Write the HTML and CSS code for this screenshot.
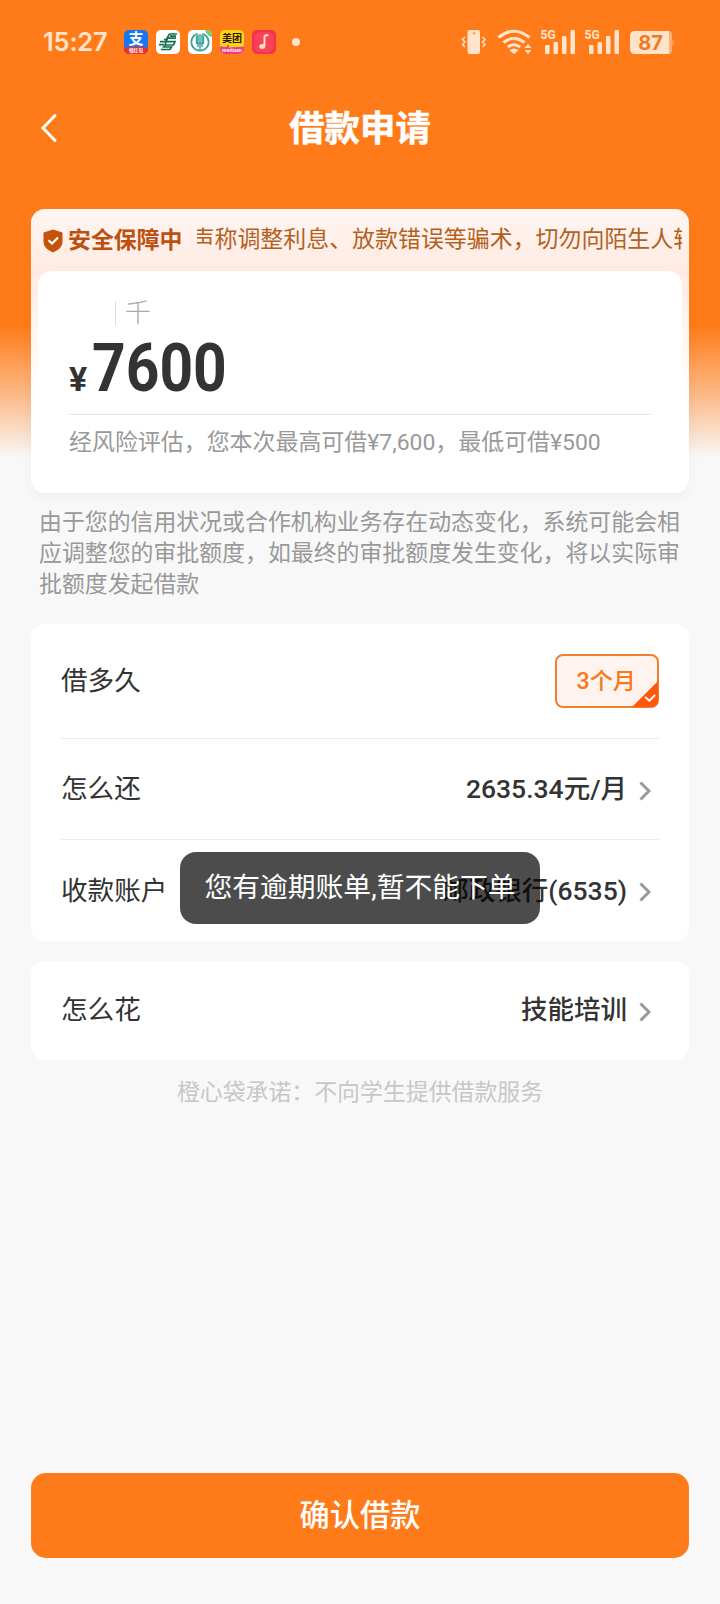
FILE: index.html
```html
<!DOCTYPE html>
<html lang="zh-CN">
<head>
<meta charset="utf-8">
<title>借款申请</title>
<link rel="stylesheet" href="styles.css">
</head>
<body>
<main class="screen">
  <header class="status">
    <span class="time">15:27</span>
    <div class="apps">
      <svg class="app" viewBox="0 0 24 24"><defs><clipPath id="r"><rect width="24" height="24" rx="5"/></clipPath></defs><g clip-path="url(#r)"><rect width="24" height="24" fill="#1677f5"/><path d="M0 17.5Q12 16 24 17.5V24H0Z" fill="#e5302c"/><text x="12" y="14.4" class="app-zhi">支</text><text x="12" y="22.4" class="app-tiny">领红包</text></g></svg>
      <svg class="app" viewBox="0 0 24 24"><rect width="24" height="24" rx="5" fill="#fff"/><g fill="none" stroke="#14704f" stroke-width="1.7"><path d="M21 4H13.500L11 8.200H20M20 6.200H14M4 11.700H19L17.500 15H9M8 9.500H12M3 14.700H8M6.500 17H15.500L14 19.500H5M11 8.500L8.500 17"/></g></svg>
      <svg class="app" viewBox="0 0 24 24"><rect width="24" height="24" rx="5" fill="#fff"/><path d="M17 0H19Q24 0 24 5V7Q19 6 17 0Z" fill="#79cf62"/><g fill="none" stroke="#37a39a"><path d="M9.500 3.800A8.600 8.600 0 1 0 14.500 3.800" stroke-width="1.900"/><path d="M8.500 6V13.500H15.500V6M12 4V20M10 4.500V17M14 4.500V17" stroke-width="1.400"/></g></svg>
      <svg class="app" viewBox="0 0 24 24"><g clip-path="url(#r)"><rect width="24" height="24" fill="#ffd31a"/><path d="M0 16.500Q12 18 24 16.500V24H0Z" fill="#ed3c82"/><path d="M8 14L9.500 17H6.500Z" fill="#ed3c82"/><text x="12" y="12.300" class="app-mt">美团</text><text x="12" y="22.300" class="app-tiny">meituan</text></g></svg>
      <svg class="app" viewBox="0 0 24 24"><rect width="24" height="24" rx="5" fill="#f4324c"/><rect x="2" y="2" width="20" height="20" rx="6" fill="#fb5266" opacity=".5"/><path d="M16.500 5.200H14Q12.500 5.200 12.500 7V16" fill="none" stroke="#ffd9c9" stroke-width="2"/><ellipse cx="10.200" cy="16.500" rx="3" ry="2.500" fill="#ffd9c9"/></svg>
      <i class="dot"></i>
    </div>
    <svg class="signals" viewBox="456 24 224 34">
      <g fill="#ffe3cb">
        <rect x="467.500" y="29" width="12.500" height="24" rx="2"/>
        <circle cx="474" cy="32.200" r="1.200" fill="#ff9b52"/>
        <path d="M465 36L462.500 38.500L465 41L462.500 43.500L465 46M482.500 36L485 38.500L482.500 41L485 43.500L482.500 46" fill="none" stroke="#ffe3cb" stroke-width="1.500"/>
        <g fill="none" stroke="#ffe3cb" stroke-width="3"><path d="M498.500 36.500Q514 24 529.500 36.500"/><path d="M503.500 41.500Q514 33.500 524.500 41.500"/><path d="M507.800 46Q514 41.500 520.200 46"/></g>
        <path d="M509.300 49.200Q514 46 518.700 49.200L514 53Z"/>
        <path d="M528 43L531.500 47H524.500ZM528 53L531.500 49H524.500Z"/>
        <rect x="545" y="44" width="4.500" height="9" rx="1"/><rect x="553.500" y="41" width="4.500" height="12" rx="1"/><rect x="562" y="35" width="4.500" height="18" rx="1"/><rect x="570.500" y="29" width="4.500" height="24" rx="1"/>
        <rect x="589" y="44" width="4.500" height="9" rx="1"/><rect x="597.500" y="41" width="4.500" height="12" rx="1"/><rect x="606" y="35" width="4.500" height="18" rx="1"/><rect x="614.500" y="29" width="4.500" height="24" rx="1"/>
        <text x="540.500" y="38.300" class="net">5G</text><text x="584.500" y="38.300" class="net">5G</text>
        <path d="M635 30H669V53H635Q630 53 630 48V35Q630 30 635 30Z"/>
        <path d="M669 30Q672 30.500 672 34V49Q672 52.500 669 53ZM672.500 38Q674 39 674 41.500Q674 44 672.500 45Z" opacity=".5"/>
      </g>
      <text x="650.500" y="49" class="level">87</text>
    </svg>
  </header>

  <nav class="nav">
    <svg class="back" viewBox="0 0 18 30"><path d="M15 2.500L3 15L15 27.500"/></svg>
    <h1 class="title">借款申请</h1>
  </nav>

  <section class="loan">
    <div class="notice">
      <svg class="shield" viewBox="0 0 20 24"><path d="M10 .5L19.500 3.500V13Q19.500 19.500 10 23.500Q.5 19.500 .5 13V3.500Z" fill="#c4530b"/><path d="M5.500 11.200L9 14.500L15 8.500" fill="none" stroke="#fff" stroke-width="2.200"/></svg>
      <strong class="safe">安全保障中</strong>
      <div class="ticker"><span class="ticker-text">声称调整利息、放款错误等骗术，切勿向陌生人转</span></div>
    </div>
    <div class="amount-card">
      <div class="unit"><i class="tick"></i><span>千</span></div>
      <div class="amount"><span class="yen">¥</span><span class="figure">7600</span></div>
      <p class="range">经风险评估，您本次最高可借¥7,600，最低可借¥500</p>
    </div>
  </section>

  <p class="remark">由于您的信用状况或合作机构业务存在动态变化，系统可能会相应调整您的审批额度，如最终的审批额度发生变化，将以实际审批额度发起借款</p>

  <section class="card">
    <div class="row row-term">
      <span>借多久</span>
      <span class="term">3个月<svg class="corner" viewBox="0 0 27 27"><path d="M27 0V20Q27 27 20 27H0Z" fill="#ff5808"/><path d="M13.500 16.500L18 20.500L24 14.500" fill="none" stroke="#fff" stroke-width="2"/></svg></span>
    </div>
    <div class="row">
      <span>怎么还</span>
      <span class="value">2635.34元/月<svg class="arrow" viewBox="0 0 12 20"><path d="M1.500 1.500L10 10L1.500 18.500"/></svg></span>
    </div>
    <div class="row row-account">
      <span>收款账户</span>
      <span class="value">邮政银行(6535)<svg class="arrow" viewBox="0 0 12 20"><path d="M1.500 1.500L10 10L1.500 18.500"/></svg></span>
    </div>
  </section>

  <section class="card card-use">
    <div class="row row-use">
      <span>怎么花</span>
      <span class="value">技能培训<svg class="arrow" viewBox="0 0 12 20"><path d="M1.500 1.500L10 10L1.500 18.500"/></svg></span>
    </div>
  </section>

  <p class="promise">橙心袋承诺：不向学生提供借款服务</p>
  <button class="confirm">确认借款</button>
  <div class="toast">您有逾期账单,暂不能下单</div>
</main>
</body>
</html>
```
FILE: styles.css
```css
* { box-sizing: border-box; margin: 0; padding: 0; }
body { background: #f8f8f8; }
.screen {
  position: relative;
  display: flex;
  flex-direction: column;
  width: 720px;
  height: 1604px;
  padding: 0 31px 46px;
  overflow: hidden;
  font-family: Roboto, "Noto Sans CJK SC", sans-serif;
  color: #333;
  background: linear-gradient(#ff7b19 0, #ff7b19 325px, #fcb57e 390px, #f8f8f8 458px);
}
.status { display: flex; align-items: center; height: 83px; margin-right: 9px; padding-left: 12px; }
.time { width: 81px; font: 600 25.500px/30px Inter, sans-serif; letter-spacing: -.2px; color: #ffe3cb; }
.apps { display: flex; align-items: center; gap: 8px; }
.app { width: 24px; height: 24px; }
.app-zhi { font: 700 15px "Noto Sans CJK SC", sans-serif; fill: #fff; text-anchor: middle; }
.app-mt { font: 700 10px "Noto Sans CJK SC", sans-serif; fill: #251c08; text-anchor: middle; }
.app-tiny { font: 700 4.800px "Noto Sans CJK SC", sans-serif; fill: #fff; text-anchor: middle; }
.dot { width: 8px; height: 8px; margin-left: 8px; border-radius: 50%; background: #ffe3cb; }
.signals { width: 224px; height: 34px; margin-left: auto; }
.net { font: 700 12px Roboto, sans-serif; }
.level { font: 700 20px Inter, sans-serif; fill: #f07a24; text-anchor: middle; }

.nav { display: grid; grid-template-columns: 60px 1fr 60px; align-items: center; height: 89px; }
.back { width: 18px; height: 30px; margin-left: 9px; fill: none; stroke: #fff; stroke-width: 3; stroke-linecap: round; }
.title { padding-top: 2px; font-size: 35.400px; line-height: 50px; font-weight: 700; text-align: center; color: #fff; -webkit-text-stroke: .5px #fff; }

.loan {
  height: 284px;
  margin-top: 37px;
  border-radius: 14px;
  background: linear-gradient(#fff6f3 0, #ffeae2 62px, #fff4ed 110px, #fff 190px);
  box-shadow: 0 4px 14px rgba(0, 0, 0, .04);
}
.notice { display: flex; align-items: center; height: 62px; padding: 0 7px 0 12px; color: #bd500f; }
.shield { width: 20px; height: 24px; margin: 1px 5px 0 0; }
.safe { width: 129px; padding-top: 2px; font-size: 22.900px; line-height: 32px; font-weight: 700; white-space: nowrap; }
.ticker { flex: 1; overflow: hidden; white-space: nowrap; color: #b3611d; font-size: 22.950px; line-height: 34px; }
.ticker-text { margin-left: -5.500px; }
.amount-card { height: 222px; margin: 0 7px; padding: 28px 31px 0; border-radius: 14px; background: #fff; }
.unit { display: flex; align-items: center; gap: 9px; height: 28px; padding-left: 46px; font-size: 26px; line-height: 28px; font-weight: 300; color: #aaa; }
.tick { width: 1px; height: 24px; background: #ddd; }
.amount { display: flex; align-items: baseline; height: 88px; padding-top: 1.500px; border-bottom: 1px solid #e5e5e5; font-weight: 700; line-height: 80px; }
.yen { width: 23px; font-size: 34px; }
.figure { font-size: 66px; transform: scaleX(.89); transform-origin: left; }
.range { margin-top: 11px; font-size: 22.950px; line-height: 34px; white-space: nowrap; color: #999; }

.remark { margin: 14px 0 24px; padding-left: 8px; font-size: 22.900px; line-height: 31px; color: #999; }
.card { padding: 0 30px; border-radius: 14px; background: #fff; }
.card-use { margin-top: 20px; }
.row { display: flex; align-items: center; justify-content: space-between; height: 101px; font-size: 26.600px; line-height: 38px; }
.row + .row { border-top: 1px solid #ececec; }
.row-term { height: 114px; }
.row.row-account { height: 102px; }
.row-use { height: 99px; padding-bottom: 1px; }
.value { display: flex; align-items: center; padding-right: 8px; font-weight: 500; font-size: 26.500px; }
.arrow { width: 12px; height: 20px; margin: 3px 0 0 12px; fill: none; stroke: #999; stroke-width: 3; }
.term { position: relative; width: 104px; height: 54px; padding-left: 19.500px; border: 2px solid #ee8032; border-radius: 8px; background: #fff3f0; color: #f97817; font-size: 23.200px; line-height: 50px; font-weight: 500; }
.corner { position: absolute; right: -1px; bottom: -1px; width: 26px; height: 26px; }
.promise { margin-top: 16px; font-size: 22.900px; line-height: 34px; text-align: center; color: #c7c7c7; }
.confirm { height: 85px; margin-top: auto; border: 0; border-radius: 15px; background: #ff7b19; color: #fff; font: 500 30.200px/44px Roboto, "Noto Sans CJK SC", sans-serif; }
.toast { position: absolute; left: 180px; top: 852px; width: 360px; height: 72px; border-radius: 16px; background: rgba(0, 0, 0, .7); color: #fff; font-size: 27.800px; line-height: 72px; text-align: center; }
```
